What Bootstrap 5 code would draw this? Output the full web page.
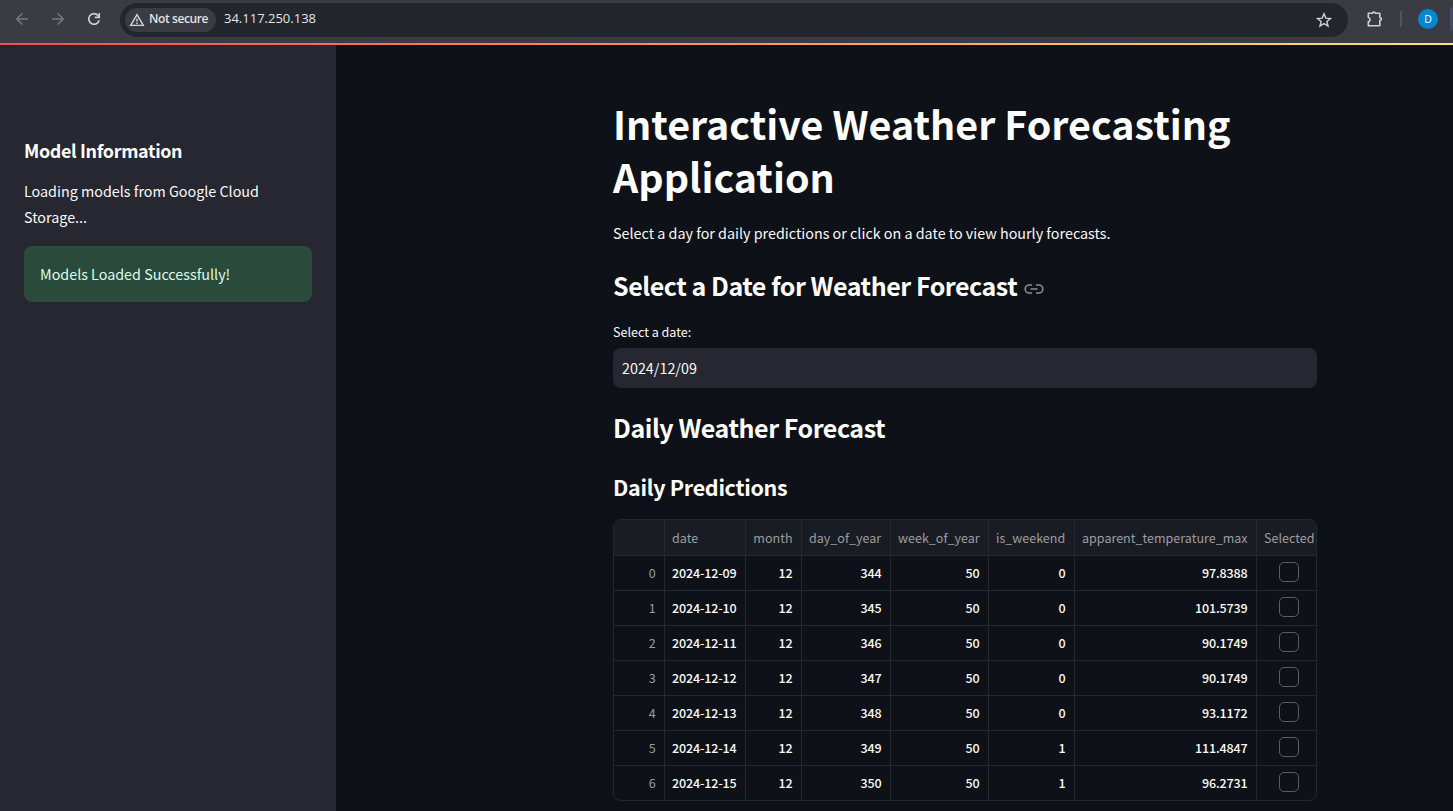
<!DOCTYPE html>
<html lang="en" data-bs-theme="dark">
<head>
<meta charset="utf-8">
<title>Interactive Weather Forecasting Application</title>
<link href="https://cdn.jsdelivr.net/npm/bootstrap@5.3.0/dist/css/bootstrap.min.css" rel="stylesheet">
<style>
  body { height: 811px; background: #0e1117; color: #fafafa; font-family: "Noto Sans CJK SC", "Noto Sans", sans-serif; font-size: 14.33px; line-height: 26px; }
  .toolbar { height: 43px; background: #3a3b43; font-family: "Open Sans", "Noto Sans", sans-serif; padding-bottom: 5px; }
  .tool-icons { width: 120px; padding-left: 14px; gap: 20px; }
  .omnibox { width: 1228px; height: 34px; background: #24262d; padding-left: 5px; padding-right: 16px; margin-top: 1px; }
  .chip { width: 91px; height: 24px; background: #3a3b43; color: #e3e3e6; font-size: 12px; font-weight: 600; letter-spacing: -.41px; padding-left: 4px; gap: 4px; }
  .chip span { line-height: 22px; padding-bottom: 2px; }
  .url { font-size: 13px; color: #e3e3e6; margin-left: 8px; line-height: 22px; padding-bottom: 3px; }
  .avatar { width: 20px; height: 20px; background: #0288d1; font-size: 10.5px; line-height: 20px; color: #fff; margin-left: 16px; }
  .ext { margin-left: 18px; }
  .sep { width: 2px; height: 16px; background: #52545c; margin-left: 16px; }
  .edge-pill { width: 3px; height: 24px; background: #434c66; border-radius: 3px 0 0 3px; }
  .decoration { height: 2px; background: linear-gradient(90deg, #ff4b4b, #ffe07a); }
  .side { width: 336px; background: #262730; padding: 90px 24px 0; }
  .side h3 { font-size: 17.9px; font-weight: 700; letter-spacing: -.34px; line-height: 30px; margin: 0 0 13px; }
  .ok { height: 56px; background: #2a4a3c; color: #dffde9; border-radius: 8px; padding: 15px 16px; margin-top: 16px; }
  .page { width: 704px; margin-left: 277px; padding-top: 51px; }
  .page h1 { font-size: 39.4px; font-weight: 700; line-height: 53px; margin: 0; letter-spacing: .02px; }
  .intro { margin: 18px 0 0; }
  .page h2 { font-size: 25px; font-weight: 700; letter-spacing: -.45px; line-height: 34px; margin: 22px 0 0; }
  .page h3 { font-size: 21.5px; font-weight: 700; letter-spacing: -.3px; line-height: 30px; margin: 28px 0 0; }
  .link-mark { margin: 7px 0 0 7px; }
  .lbl { font-size: 12.54px; line-height: 20px; margin-top: 20px; }
  .datebox { height: 40px; background: #262730; border-radius: 8px; padding: 0 9px; line-height: 40px; margin-top: 6px; }
  .grid-frame { border: 1px solid #26282d; border-radius: 8px; height: 282px; margin-top: 17px; font-size: 12.54px; }
  .grid-frame table { table-layout: fixed; width: 702px; border-collapse: separate; border-spacing: 0; }
  .grid-frame th, .grid-frame td { height: 35px; line-height: 34px; padding: 0 7px; border-right: 1px solid #26282d; border-bottom: 1px solid #26282d; white-space: nowrap; }
  .grid-frame td { font-weight: 500; letter-spacing: -.15px; padding-right: 8px; }
  .grid-frame th { height: 36px; background: #1a1c23; padding-top: 1px; }
  .grid-frame th, .grid-frame .idx { color: #9c9da0; font-weight: 400; }
  .grid-frame .text-end { padding-right: 8.5px; }
  .grid-frame tr > :last-child { border-right: 0; }
  .grid-frame tr > td:last-child { padding: 0 0 0 4px; }
  .check { width: 20px; height: 20px; border: 1px solid #5b5d61; border-radius: 5px; margin: -2px auto 0; }
</style>
<script src="https://cdn.jsdelivr.net/npm/bootstrap@5.3.0/dist/js/bootstrap.bundle.min.js"></script>
</head>
<body class="overflow-hidden d-flex flex-column">
<header class="toolbar d-flex align-items-center">
  <div class="tool-icons d-flex align-items-center">
    <svg width="16" height="16" viewBox="0 0 16 16" fill="none" stroke="#77797f" stroke-width="1.5"><path d="M14 8H3M8.3 2.5 2.8 8l5.5 5.5"/></svg>
    <svg width="16" height="16" viewBox="0 0 16 16" fill="none" stroke="#77797f" stroke-width="1.5"><path d="M2 8h11M7.7 2.5 13.2 8l-5.5 5.5"/></svg>
    <svg width="16" height="16" viewBox="0 0 16 16" fill="none" stroke="#cfd0d4" stroke-width="1.6"><path d="M13.2 9.2A5.3 5.3 0 1 1 12 4.4l1 1.3"/><path d="M13.3 2v4.4H8.8"/></svg>
  </div>
  <div class="omnibox rounded-pill d-flex align-items-center">
    <div class="chip rounded-pill d-flex align-items-center">
      <svg width="16" height="14" viewBox="0 0 16 14" fill="none" stroke="#d4d5d9" stroke-width="1.4"><path d="M8 1.7 14.3 12.4H1.7z"/><path d="M8 5.4v3M8 9.4v1.5"/></svg>
      <span>Not secure</span>
    </div>
    <span class="url">34.117.250.138</span>
    <svg class="ms-auto" width="16" height="16" viewBox="0 0 16 16" fill="none" stroke="#cfd0d4" stroke-width="1.4"><path d="m8 1.8 1.8 4.3 4.7.4-3.6 3 1.1 4.6L8 11.6l-4 2.5 1.1-4.6-3.6-3 4.7-.4z"/></svg>
  </div>
  <svg class="ext" width="18" height="18" viewBox="0 0 18 18" fill="none" stroke="#cfd0d4" stroke-width="1.6" stroke-linejoin="round"><path d="M2.3 3.3h4.3c0-1.8 2.6-1.8 2.6 0h4.6v4.4c2.2 0 2.2 2.8 0 2.8v5.3H2.3v-4.1c2.4-.3 2.4-3.9 0-4.2z"/></svg>
  <div class="sep"></div>
  <div class="avatar rounded-circle text-center">D</div>
  <div class="edge-pill ms-auto"></div>
</header>
<div class="decoration"></div>
<div class="d-flex flex-grow-1">
  <aside class="side">
    <h3>Model Information</h3>
    <div>Loading models from Google Cloud<br>Storage...</div>
    <div class="ok">Models Loaded Successfully!</div>
  </aside>
  <main class="page">
    <h1>Interactive Weather Forecasting<br>Application</h1>
    <p class="intro">Select a day for daily predictions or click on a date to view hourly forecasts.</p>
    <h2 class="d-flex align-items-center"><span>Select a Date for Weather Forecast</span>
      <svg class="link-mark" width="20" height="12" viewBox="0 0 20 12" fill="none" stroke="#8b8d91" stroke-width="1.6"><path d="M8 2H5.2a4 4 0 0 0 0 8H8M12 2h2.8a4 4 0 0 1 0 8H12M6.5 6h7"/></svg></h2>
    <div class="lbl">Select a date:</div>
    <div class="datebox">2024/12/09</div>
    <h2>Daily Weather Forecast</h2>
    <h3>Daily Predictions</h3>
    <div class="grid-frame overflow-hidden">
      <table>
        <colgroup><col style="width:51px"><col style="width:81px"><col style="width:56px"><col style="width:89px"><col style="width:98px"><col style="width:86px"><col style="width:182px"><col style="width:59px"></colgroup>
        <thead><tr><th></th><th>date</th><th class="text-end">month</th><th>day_of_year</th><th>week_of_year</th><th>is_weekend</th><th>apparent_temperature_max</th><th>Selected</th></tr></thead>
        <tbody id="rows"></tbody>
      </table>
    </div>
  </main>
</div>
<script>
  const data = [['09',344,0,'97.8388'],['10',345,0,'101.5739'],['11',346,0,'90.1749'],['12',347,0,'90.1749'],['13',348,0,'93.1172'],['14',349,1,'111.4847'],['15',350,1,'96.2731']];
  document.getElementById('rows').innerHTML = data.map(([d, n, w, t], i) =>
    `<tr><td class="idx text-end">${i}</td><td>2024-12-${d}</td><td class="text-end">12</td><td class="text-end">${n}</td><td class="text-end">50</td><td class="text-end">${w}</td><td class="text-end">${t}</td><td><div class="check"></div></td></tr>`).join('');
</script>
</body>
</html>
